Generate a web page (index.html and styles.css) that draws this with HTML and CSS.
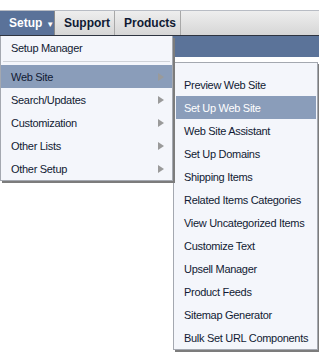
FILE: index.html
```html
<!DOCTYPE html>
<html>
<head>
<meta charset="utf-8">
<link rel="stylesheet" href="styles.css">
</head>
<body>
<div class="page">
  <div class="tabbar">
    <div class="tab active">Setup <span class="caret">&#9660;</span></div>
    <div class="tab">Support</div>
    <div class="tab">Products</div>
  </div>
  <div class="strip"></div>

  <div class="menu main">
    <div class="item">Setup Manager</div>
    <div class="sep"></div>
    <div class="item hl">Web Site<span class="arrow"></span></div>
    <div class="item">Search/Updates<span class="arrow"></span></div>
    <div class="item">Customization<span class="arrow"></span></div>
    <div class="item">Other Lists<span class="arrow"></span></div>
    <div class="item">Other Setup<span class="arrow"></span></div>
  </div>

  <div class="menu sub">
    <div class="item">Preview Web Site</div>
    <div class="item hl white">Set Up Web Site</div>
    <div class="item">Web Site Assistant</div>
    <div class="item">Set Up Domains</div>
    <div class="item">Shipping Items</div>
    <div class="item">Related Items Categories</div>
    <div class="item">View Uncategorized Items</div>
    <div class="item">Customize Text</div>
    <div class="item">Upsell Manager</div>
    <div class="item">Product Feeds</div>
    <div class="item">Sitemap Generator</div>
    <div class="item">Bulk Set URL Components</div>
  </div>
</div>
</body>
</html>
```

FILE: styles.css
```css
html, body {
  margin: 0;
  padding: 0;
  background: #ffffff;
}
.page {
  position: relative;
  width: 319px;
  height: 352px;
  padding-top: 10px;
  box-sizing: border-box;
  font-family: "Liberation Sans", Arial, sans-serif;
  overflow: hidden;
}
.tabbar {
  display: flex;
  height: 24px;
  border-top: 1px solid #b8bcc4;
  border-bottom: 1px solid #2e3440;
  background: linear-gradient(#eeeeee, #d6d6d6);
}
.tab {
  display: flex;
  align-items: center;
  font-size: 12px;
  font-weight: bold;
  color: #0f1a33;
  border-right: 1px solid #a8a8a8;
  box-sizing: border-box;
}
.tab:nth-child(1) { width: 55px; padding-left: 9px; }
.tab:nth-child(2) { width: 60px; padding-left: 9px; }
.tab:nth-child(3) { width: 66px; padding-left: 9px; }
.tab.active {
  background: #5a7299;
  color: #ffffff;
  border-right: 1px solid #8a8a8a;
}
.caret {
  font-size: 8px;
  margin-left: 4px;
  margin-top: 2px;
}
.strip {
  height: 21px;
  background: #5b7399;
}
.menu {
  position: absolute;
  background: #f4f6fb;
  box-sizing: border-box;
  font-size: 11px;
  letter-spacing: -0.3px;
  color: #111a33;
  box-shadow: 2px 2px 0 #7c7c7c;
}
.main {
  left: 0;
  top: 36px;
  width: 173px;
  border: 1px solid #a4a8b0;
  border-top: 0;
  padding-top: 0;
  z-index: 2;
}
.sub {
  left: 173px;
  top: 62px;
  width: 145px;
  height: 288px;
  border: 1px solid #a4a8b0;
  padding-top: 10px;
  z-index: 1;
}
.item {
  position: relative;
  height: 23px;
  display: flex;
  align-items: center;
  padding-left: 10px;
}
.sub .item {
  margin: 0 1px 0 2px;
  padding-left: 8px;
}
.hl {
  background: #8a9dba;
}
.white {
  color: #ffffff;
}
.sep {
  height: 1px;
  background: #cfd2d8;
  margin: 2px 2px 3px 2px;
}
.arrow {
  position: absolute;
  left: 157px;
  top: 8px;
  width: 0;
  height: 0;
  border-top: 4px solid transparent;
  border-bottom: 4px solid transparent;
  border-left: 6px solid #9a9a9a;
}
```
